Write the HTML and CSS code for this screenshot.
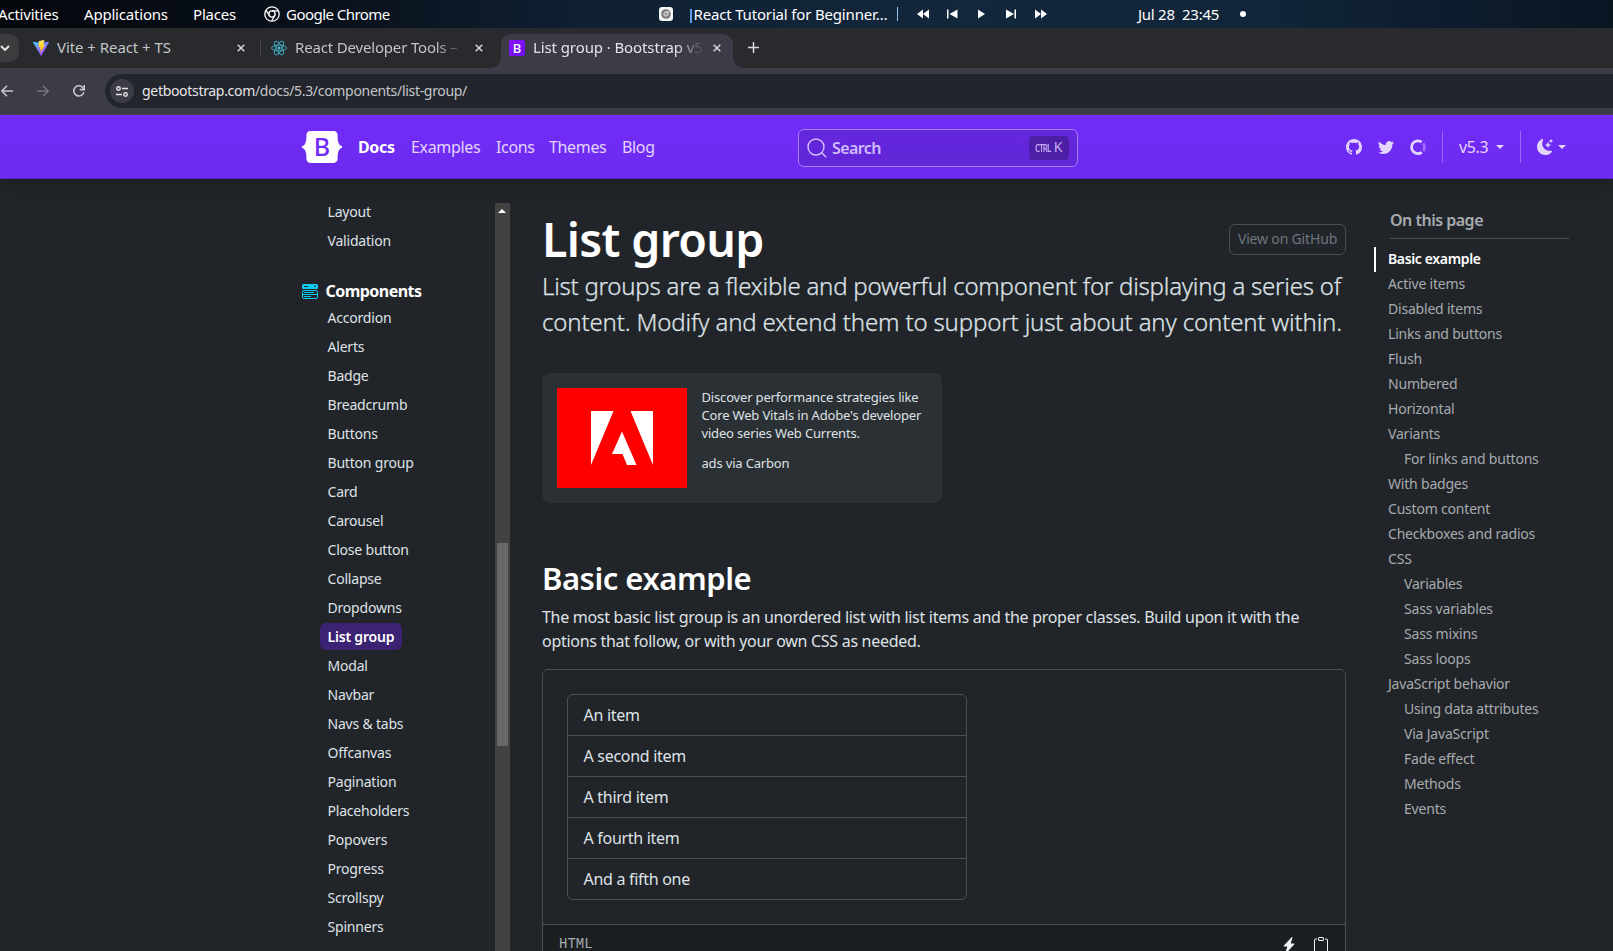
FILE: index.html
```html
<!DOCTYPE html>
<html lang="en">
<head>
<meta charset="utf-8">
<title>List group · Bootstrap v5.3</title>
<link rel="stylesheet" href="styles.css">
</head>
<body>
<div class="screen">
  <header class="desk">
    <div class="desk-left">
      <span class="desk-item activities">Activities</span>
      <span class="desk-item apps">Applications</span>
      <span class="desk-item places">Places</span>
      <svg class="desk-chrome" width="16" height="16" viewBox="0 0 16 16" fill="none" stroke="#fff" stroke-width="1.3"><circle cx="8" cy="8" r="7.2"/><circle cx="8" cy="8" r="3.1"/><path d="M8 4.9h6.3M5.3 9.5 2 4.2M10.7 9.5 7.7 15"/></svg>
      <span class="desk-item chrome">Google Chrome</span>
    </div>
    <div class="desk-media">
      <svg class="player" width="14" height="14" viewBox="0 0 14 14"><rect width="14" height="14" rx="3" fill="#f4f4f4"/><circle cx="7" cy="7" r="4.8" fill="#777"/><circle cx="7" cy="7" r="2.2" fill="#999" stroke="#e4e4e4"/><path d="M7 4.8h4.4" stroke="#ddd"/></svg>
      <i class="bar"></i>
      <span class="song">React Tutorial for Beginner…</span>
      <i class="bar warm"></i>
      <svg class="controls" width="134" height="14" viewBox="0 0 134 14" fill="#fff"><path d="M7 2.500v9L1 7zM13 2.500v9L7 7zM31 2.500h1.500v9H31zM41.500 2.500v9L33.500 7zM62 2.500v9l7-4.500zM90 2.500v9l8-4.500zM98.500 2.500h1.500v9h-1.500zM119 2.500v9l6-4.500zM125 2.500v9l6-4.500z"/></svg>
    </div>
    <div class="desk-clock"><span>Jul 28&nbsp; 23:45</span><i class="dot"></i></div>
  </header>

  <div class="tabs">
    <div class="tab-search"><svg width="10" height="6" viewBox="0 0 10 6" fill="none" stroke="#e3e3e3" stroke-width="2"><path d="m1 1 4 4 4-4"/></svg></div>
    <div class="tab tab-vite">
      <svg width="16" height="16" viewBox="0 0 16 16"><defs><linearGradient id="va" x1="0" y1="0" x2=".7" y2="1"><stop stop-color="#41d1ff"/><stop offset="1" stop-color="#bd34fe"/></linearGradient><linearGradient id="vb" x1="0" y1="0" x2="0" y2="1"><stop stop-color="#ffea83"/><stop offset=".3" stop-color="#ffdd35"/><stop offset="1" stop-color="#ffa800"/></linearGradient></defs><path d="M15.9 2.4 8.5 15.6a.4.4 0 0 1-.7 0L.1 2.4a.4.4 0 0 1 .4-.6L8 3.1l7.5-1.3a.4.4 0 0 1 .4.6z" fill="url(#va)"/><path d="m11.500 0-5.600 1.100-.4 6.200 1.700-.3-.5 2.300 1.300-.3-.8 4.200 5-8.600-2 .4z" fill="url(#vb)"/></svg>
      <span class="tab-title">Vite + React + TS</span>
      <svg class="close" width="8" height="8" viewBox="0 0 8 8"><path d="m.7.7 6.600 6.600m0-6.600L.7 7.300"/></svg>
    </div>
    <i class="tab-sep"></i>
    <div class="tab tab-react">
      <svg width="16" height="16" viewBox="0 0 16 16" fill="none" stroke="#3fa3bb"><circle cx="8" cy="8" r="1.500" fill="#58c4dc" stroke="none"/><ellipse cx="8" cy="8" rx="7.500" ry="2.900"/><ellipse cx="8" cy="8" rx="7.500" ry="2.900" transform="rotate(60 8 8)"/><ellipse cx="8" cy="8" rx="7.500" ry="2.900" transform="rotate(120 8 8)"/></svg>
      <span class="tab-title faded">React Developer Tools –</span>
      <svg class="close" width="8" height="8" viewBox="0 0 8 8"><path d="m.7.7 6.600 6.600m0-6.600L.7 7.300"/></svg>
    </div>
    <div class="tab tab-active">
      <span class="b-icon">B</span>
      <span class="tab-title faded">List group · Bootstrap v5</span>
      <svg class="close" width="8" height="8" viewBox="0 0 8 8"><path d="m.7.7 6.600 6.600m0-6.600L.7 7.300"/></svg>
    </div>
    <svg class="new-tab" width="11" height="11" viewBox="0 0 11 11" stroke="#dcdcdc" stroke-width="1.500"><path d="M5.500 0v11M0 5.500h11"/></svg>
  </div>

  <div class="toolbar">
    <svg class="nav-back" width="12" height="12" viewBox="0 0 12 12" fill="none" stroke="#c7c8cc" stroke-width="1.600"><path d="M12 6H1M6 .8.900 6 6 11.200"/></svg>
    <svg class="nav-fwd" width="12" height="12" viewBox="0 0 12 12" fill="none" stroke="#74757b" stroke-width="1.600"><path d="M0 6h11M6 .8 11.100 6 6 11.200"/></svg>
    <svg class="nav-reload" width="12" height="12" viewBox="0 0 12 12" fill="none" stroke="#c7c8cc" stroke-width="1.600"><path d="M10.800 7.300A5.100 5.100 0 1 1 10.300 3.300L11.200 4.500"/><path d="M11.200 0v4.600H6.800"/></svg>
    <div class="omnibox">
      <span class="site-info"><svg width="12" height="11" viewBox="0 0 12 11" fill="none" stroke="#e3e3e3" stroke-width="1.500"><circle cx="2.500" cy="2.500" r="1.700"/><path d="M6 2.500h6M0 8.500h6"/><circle cx="9.500" cy="8.500" r="1.700"/></svg></span>
      <span class="url">getbootstrap.com<b>/docs/5.3/components/list-group/</b></span>
    </div>
  </div>

  <nav class="navbar">
    <div class="brand">
      <svg width="40" height="32" viewBox="0 0 118 94"><path fill="#fff" d="M24.509 0c-6.733 0-11.715 5.893-11.492 12.284.214 6.140-.064 14.092-2.066 20.577C8.943 39.365 5.547 43.485 0 44.014v5.972c5.547.529 8.943 4.649 10.951 11.153 2.002 6.485 2.280 14.437 2.066 20.577C12.794 88.106 17.776 94 24.510 94H93.500c6.733 0 11.714-5.893 11.491-12.284-.214-6.140.064-14.092 2.066-20.577 2.009-6.504 5.396-10.624 10.943-11.153v-5.972c-5.547-.529-8.934-4.649-10.943-11.153-2.002-6.484-2.280-14.437-2.066-20.577C105.214 5.894 100.233 0 93.500 0H24.508z"/></svg>
      <span>B</span>
    </div>
    <div class="links">
      <a class="l-docs">Docs</a><a class="l-ex">Examples</a><a class="l-ic">Icons</a><a class="l-th">Themes</a><a class="l-bl">Blog</a>
    </div>
    <div class="search">
      <svg width="20" height="20" viewBox="0 0 20 20" fill="none" stroke="#d3c0fb" stroke-width="1.400"><circle cx="9" cy="9" r="8"/><path d="m14.500 14.500 4.700 4.700"/></svg>
      <span class="ph">Search</span>
      <span class="kbd"><small>CTRL</small><span>K</span></span>
    </div>
    <div class="social">
      <svg width="16" height="16" viewBox="0 0 16 16"><path d="M8 0C3.580 0 0 3.580 0 8c0 3.540 2.290 6.530 5.470 7.590.4.070.55-.17.55-.38 0-.19-.01-.82-.01-1.490-2.010.37-2.530-.49-2.690-.94-.09-.23-.48-.94-.82-1.130-.28-.15-.68-.52-.01-.53.63-.01 1.080.58 1.230.82.72 1.210 1.870.87 2.330.66.07-.52.28-.87.51-1.070-1.780-.2-3.640-.89-3.640-3.950 0-.87.31-1.590.82-2.150-.08-.2-.36-1.020.08-2.120 0 0 .67-.21 2.200.82.64-.18 1.320-.27 2-.27s1.360.09 2 .27c1.530-1.040 2.200-.82 2.200-.82.44 1.100.16 1.920.08 2.120.51.56.82 1.270.82 2.150 0 3.070-1.870 3.750-3.650 3.950.29.25.54.73.54 1.480 0 1.070-.01 1.930-.01 2.200 0 .21.15.46.55.38A8.010 8.010 0 0 0 16 8c0-4.420-3.580-8-8-8"/></svg>
      <svg width="16" height="16" viewBox="0 0 16 16"><path d="M5.026 15c6.038 0 9.341-5.003 9.341-9.334q.002-.211-.006-.422A6.700 6.700 0 0 0 16 3.542a6.700 6.700 0 0 1-1.889.518 3.300 3.300 0 0 0 1.447-1.817 6.500 6.500 0 0 1-2.087.793A3.286 3.286 0 0 0 7.875 6.030a9.320 9.320 0 0 1-6.767-3.429 3.290 3.290 0 0 0 1.018 4.382A3.300 3.300 0 0 1 .64 6.575v.045a3.290 3.290 0 0 0 2.632 3.218 3.200 3.200 0 0 1-.865.115 3 3 0 0 1-.614-.057 3.280 3.280 0 0 0 3.067 2.277A6.600 6.600 0 0 1 .78 13.580a6 6 0 0 1-.78-.045A9.340 9.340 0 0 0 5.026 15"/></svg>
      <svg width="16" height="16" viewBox="0 0 40 41"><path fill-opacity=".4" d="M32.800 21c0 2.400-.8 4.900-2 6.900l5.100 5.100c2.500-3.400 4.100-7.600 4.100-12 0-4.600-1.600-8.800-4-12.200L30.700 14c1.200 2 2 4.300 2 7z"/><path d="M20 33.700a12.800 12.800 0 0 1 0-25.600c2.600 0 5 .7 7 2.100L32 5a20 20 0 1 0 .1 31.900l-5-5.200a13 13 0 0 1-7 2z"/></svg>
    </div>
    <i class="vr"></i>
    <div class="version"><span>v5.3</span><i class="caret"></i></div>
    <i class="vr"></i>
    <div class="theme">
      <svg width="16" height="16" viewBox="0 0 16 16"><path d="M6 .278a.77.77 0 0 1 .08.858 7.200 7.200 0 0 0-.878 3.460c0 4.021 3.278 7.277 7.318 7.277q.792-.001 1.533-.16a.79.79 0 0 1 .81.316.73.73 0 0 1-.031.893A8.350 8.350 0 0 1 8.344 16C3.734 16 0 12.286 0 7.710 0 4.266 2.114 1.312 5.124.06A.75.75 0 0 1 6 .278"/><path d="M10.794 3.148a.217.217 0 0 1 .412 0l.387 1.162c.173.518.579.924 1.097 1.097l1.162.387a.217.217 0 0 1 0 .412l-1.162.387a1.730 1.730 0 0 0-1.097 1.097l-.387 1.162a.217.217 0 0 1-.412 0l-.387-1.162A1.730 1.730 0 0 0 9.310 6.593l-1.162-.387a.217.217 0 0 1 0-.412l1.162-.387a1.730 1.730 0 0 0 1.097-1.097zM13.863.099a.145.145 0 0 1 .274 0l.258.774c.115.346.386.617.732.732l.774.258a.145.145 0 0 1 0 .274l-.774.258a1.160 1.160 0 0 0-.732.732l-.258.774a.145.145 0 0 1-.274 0l-.258-.774a1.160 1.160 0 0 0-.732-.732l-.774-.258a.145.145 0 0 1 0-.274l.774-.258c.346-.115.617-.386.732-.732z"/></svg>
      <i class="caret"></i>
    </div>
  </nav>

  <div class="page">
    <aside class="sidebar">
      <div class="side-scroll">
        <ul><li>Layout</li><li>Validation</li></ul>
        <h2 class="side-head"><svg width="16" height="15" viewBox="0 0 16 15"><rect width="16" height="5" rx="1.500" fill="#0dcaf0"/><path d="M2 2.500h4M12 2.300h2" stroke="#212529"/><rect x=".5" y="6.500" width="15" height="8" rx="1.500" fill="none" stroke="#0dcaf0"/><path d="M2 8.500h10M1 10.500h14M2 12.500h7" stroke="#0dcaf0"/></svg>Components</h2>
        <ul>
          <li>Accordion</li><li>Alerts</li><li>Badge</li><li>Breadcrumb</li><li>Buttons</li><li>Button group</li><li>Card</li><li>Carousel</li><li>Close button</li><li>Collapse</li><li>Dropdowns</li><li class="active">List group</li><li>Modal</li><li>Navbar</li><li>Navs &amp; tabs</li><li>Offcanvas</li><li>Pagination</li><li>Placeholders</li><li>Popovers</li><li>Progress</li><li>Scrollspy</li><li>Spinners</li>
        </ul>
      </div>
      <div class="scrollbar"><i class="arrow"></i><i class="thumb"></i></div>
    </aside>

    <main class="content">
      <div class="title-row"><h1>List group</h1><a class="gh">View on GitHub</a></div>
      <p class="lead">List groups are a flexible and powerful component for displaying a series of<br><span>content. Modify and extend them to support just about any content within.</span></p>
      <div class="ad">
        <svg width="130" height="100" viewBox="0 0 130 100"><path fill="#f00" d="M0 0h130v100H0z"/><path fill="#fff" d="M34 23h22.500L34 77zM73.500 23H96v54zM65 43.500 79.500 77H70l-4.500-11H55z"/></svg>
        <div class="ad-text"><p>Discover performance strategies like<br>Core Web Vitals in Adobe's developer<br>video series Web Currents.</p><p>ads via Carbon</p></div>
      </div>
      <h2 class="section">Basic example</h2>
      <p class="para">The most basic list group is an unordered list with list items and the proper classes. Build upon it with the<br>options that follow, or with your own CSS as needed.</p>
      <div class="example">
        <ul class="list-group"><li>An item</li><li>A second item</li><li>A third item</li><li>A fourth item</li><li>And a fifth one</li></ul>
        <div class="codebar">
          <span>HTML</span>
          <svg class="bolt" width="16" height="16" viewBox="0 0 16 16"><path d="M11.251.068a.5.5 0 0 1 .227.580L9.677 6.500H13a.5.5 0 0 1 .364.843l-8 8.500a.5.5 0 0 1-.842-.490L6.323 9.500H3a.5.5 0 0 1-.364-.843l8-8.500a.5.5 0 0 1 .615-.090z"/></svg>
          <svg width="16" height="16" viewBox="0 0 16 16"><path d="M4 1.500H3a2 2 0 0 0-2 2V14a2 2 0 0 0 2 2h10a2 2 0 0 0 2-2V3.500a2 2 0 0 0-2-2h-1v1h1a1 1 0 0 1 1 1V14a1 1 0 0 1-1 1H3a1 1 0 0 1-1-1V3.500a1 1 0 0 1 1-1h1z"/><path d="M9.500 1a.5.5 0 0 1 .5.5v1a.5.5 0 0 1-.5.5h-3a.5.5 0 0 1-.5-.5v-1a.5.5 0 0 1 .5-.5zm-3-1A1.500 1.500 0 0 0 5 1.500v1A1.500 1.500 0 0 0 6.500 4h3A1.500 1.500 0 0 0 11 2.500v-1A1.500 1.500 0 0 0 9.500 0z"/></svg>
        </div>
      </div>
    </main>

    <aside class="toc">
      <strong>On this page</strong>
      <ul>
        <li class="active">Basic example</li><li>Active items</li><li>Disabled items</li><li>Links and buttons</li><li>Flush</li><li>Numbered</li><li>Horizontal</li><li>Variants</li><li class="sub">For links and buttons</li><li>With badges</li><li>Custom content</li><li>Checkboxes and radios</li><li>CSS</li><li class="sub">Variables</li><li class="sub">Sass variables</li><li class="sub">Sass mixins</li><li class="sub">Sass loops</li><li>JavaScript behavior</li><li class="sub">Using data attributes</li><li class="sub">Via JavaScript</li><li class="sub">Fade effect</li><li class="sub">Methods</li><li class="sub">Events</li>
      </ul>
    </aside>
  </div>
</div>
</body>
</html>
```
FILE: styles.css
```css
* { box-sizing: border-box; }
body { margin: 0; overflow: hidden; background: #212529; color: #dee2e6; font-family: "Noto Sans", sans-serif; font-size: 16px; letter-spacing: -.29px; }
ul, p, h1, h2 { margin: 0; padding: 0; list-style: none; }
svg { display: block; flex: none; }
i { display: block; flex: none; }
.screen { width: 1613px; height: 951px; overflow: hidden; display: flex; flex-direction: column; white-space: nowrap; }

/* desktop panel */
.desk { height: 28px; flex: none; display: flex; align-items: center; background: linear-gradient(90deg, #04070c 0, #0a121d 22%, #0f2032 36%, #13273c 60%, #11253a 78%, #0a1522 100%); color: #fff; font-size: 15px; line-height: 26px; letter-spacing: -.2px; }
.desk span { margin-top: -1px; }
.desk-left { width: 659px; display: flex; align-items: center; }
.desk .activities { margin-left: -2px; width: 86px; }
.apps { width: 109px; }
.places { width: 71px; }
.chrome { margin-left: 6px; letter-spacing: -.54px; }
.desk-media { width: 479px; display: flex; align-items: center; }
.bar { width: 1.500px; height: 14px; margin: 3px 2px 0 17px; background: #5a9fe8; }
.song { width: 203px; letter-spacing: -.17px; }
.bar.warm { margin: 0 18px 0 0; background: #8fc0f0; }
.desk-clock { display: flex; align-items: center; letter-spacing: -.26px; }
.desk-clock span { width: 102px; }
.dot { width: 6px; height: 6px; border-radius: 3px; background: #fff; }

/* browser tabs */
.tabs { height: 40px; flex: none; display: flex; align-items: flex-end; background: #282a2d; color: #c3c4c8; font-size: 15px; letter-spacing: -.06px; }
.tab-search { width: 19px; height: 28px; margin-bottom: 6px; border-radius: 0 10px 10px 0; background: #3c3b3d; display: flex; align-items: center; }
.tab { height: 34px; display: flex; align-items: center; padding-bottom: 6px; line-height: 26px; }
.tab-title { margin: -1px 0 1px 8px; overflow: hidden; }
.tab-vite { width: 241px; padding-left: 14px; }
.tab-vite .tab-title { width: 184px; }
.tab-vite .close { margin-left: -4px; }
.tab-react { width: 240px; padding-left: 10px; letter-spacing: -.17px; }
.tab-react .tab-title { width: 172px; }
.faded { -webkit-mask-image: linear-gradient(90deg, #000 82%, transparent 98%); mask-image: linear-gradient(90deg, #000 82%, transparent 98%); }
.close { stroke: #d8d8da; stroke-width: 1.500; }
.tab-react .close { margin-left: 8px; }
.tab-sep { width: 1px; height: 16px; margin-bottom: 12px; background: #44464a; }
.tab-active { width: 232px; padding-left: 8px; border-radius: 10px 10px 0 0; background: #3b3c45; color: #e4e4e6; position: relative; letter-spacing: -.1px; }
.tab-active::before, .tab-active::after { content: ""; position: absolute; bottom: 0; width: 10px; height: 10px; }
.tab-active::before { left: -10px; background: radial-gradient(circle at 0 0, transparent 9.500px, #3b3c45 10px); }
.tab-active::after { right: -10px; background: radial-gradient(circle at 100% 0, transparent 9.500px, #3b3c45 10px); }
.tab-active .tab-title { width: 174px; }
.tab-active .close { margin-left: 6px; }
.b-icon { width: 16px; height: 16px; border-radius: 2px; background: linear-gradient(135deg, #8a12fc, #6a10f5); color: #fff; font: 500 13px/16px "Noto Sans", sans-serif; text-align: center; }
.new-tab { margin: 0 0 15px 15px; }

/* toolbar */
.toolbar { height: 47px; flex: none; display: flex; align-items: center; background: #3b3c45; border-bottom: 1px solid #4a4a50; }
.nav-back { margin-left: 1px; }
.nav-fwd { margin-left: 24px; }
.nav-reload { margin-left: 24px; }
.omnibox { flex: 1; margin-left: 20px; height: 34px; border-radius: 17px 0 0 17px; background: #23252c; display: flex; align-items: center; padding-left: 5px; }
.site-info { width: 24px; height: 24px; border-radius: 12px; background: #3b3c45; display: grid; place-items: center; }
.url { margin: -1px 0 0 8px; color: #e6e6e9; font-size: 14px; letter-spacing: -.31px; }
.url b { font-weight: 400; color: #c4c5ca; }

/* site navbar */
.navbar { height: 64px; flex: none; display: flex; align-items: center; background: linear-gradient(#712cf9, #6c2bee); color: #e3d5fe; box-shadow: 0 8px 16px rgba(0,0,0,.15), inset 0 -1px 0 rgba(0,0,0,.15); position: relative; letter-spacing: -.34px; }
.brand { width: 40px; margin-left: 302px; display: grid; }
.brand svg, .brand span { grid-area: 1 / 1; }
.brand span { text-align: center; font: 500 25px/31px "Noto Sans", sans-serif; color: #6f2cf6; letter-spacing: 0; }
.links { width: 440px; padding-left: 16px; display: flex; }
.l-docs { width: 53px; color: #fff; font-weight: 700; }
.l-ex { width: 85px; }
.l-ic { width: 53px; }
.l-th { width: 73px; }
.search { margin: 1px 0 0 16px; width: 280px; height: 38px; border: 1px solid #a580fb; border-radius: 6px; background: rgba(0,0,0,.1); display: flex; align-items: center; padding: 0 8px; }
.ph { margin-left: 5px; width: 197px; font-weight: 600; color: #d0bbfb; letter-spacing: -.6px; }
.kbd { width: 40px; height: 24px; border-radius: 4px; background: #4d1fa6; color: #c3a9f2; display: flex; align-items: center; justify-content: space-between; padding: 0 7px 0 6px; font-size: 14px; line-height: 22px; }
.kbd small { width: 16px; font-size: 8px; font-weight: 600; letter-spacing: -.9px; transform: scaleY(1.300); }
.kbd > span { margin-top: -2px; }
.social { margin-left: 268px; width: 96px; display: flex; gap: 16px; fill: #e3d5fe; }
.vr { width: 1px; height: 32px; background: #9a69fb; }
.version { width: 77px; padding-left: 16px; display: flex; align-items: center; }
.version span { width: 37px; }
.caret { border: 4px solid transparent; border-top-color: #e3d5fe; border-bottom: 0; }
.theme { padding-left: 16px; display: flex; align-items: center; gap: 5px; fill: #e3d5fe; }

/* three-column page */
.page { flex: 1; min-height: 0; display: flex; align-items: flex-start; }
.sidebar { width: 542px; height: 748px; margin-top: 24px; padding-left: 302px; display: flex; }
.side-scroll { width: 193px; font-size: 14px; line-height: 21px; letter-spacing: -.2px; height: 748px; overflow: hidden; }
.side-scroll li { width: fit-content; margin: 2px 0 0 18px; padding: 3px 8px 3px 7.500px; border-radius: 6px; }
.side-scroll ul:first-child { margin-top: -7px; }
.side-scroll li.active { background: #3c2272; color: #fff; font-weight: 600; }
.side-head { display: flex; align-items: center; gap: 7.500px; height: 24px; margin-top: 25px; font-size: 16px; font-weight: 700; color: #fff; letter-spacing: -.54px; }
.side-scroll .side-head + ul { margin-top: -1px; }
.scrollbar { width: 15px; background: #424242; }
.arrow { margin: 6px 0 0 3px; width: 8px; border: 4px solid transparent; border-bottom-color: #fff; border-top: 0; }
.thumb { margin: 330px auto 0; width: 11px; height: 203px; background: #686868; }

.content { width: 804px; padding-top: 31px; }
.title-row { display: flex; justify-content: space-between; align-items: flex-start; height: 58px; }
h1 { font-size: 46.500px; font-weight: 600; line-height: 58px; color: #fff; letter-spacing: -.65px; }
.gh { margin-top: 14px; width: 117px; height: 31px; border: 1px solid #495057; border-radius: 6px; text-align: center; font-size: 14px; line-height: 28px; letter-spacing: -.17px; color: #6c757d; }
.lead { font-size: 24px; font-weight: 300; line-height: 36px; letter-spacing: -.23px; -webkit-text-stroke: .25px #dee2e6; }
.lead span { letter-spacing: -.15px; }
.ad { margin-top: 33px; width: 400px; height: 130px; border-radius: 8px; background: #2b3035; padding: 15px; display: flex; gap: 14.500px; }
.ad-text { font-size: 13px; line-height: 18px; letter-spacing: -.17px; }
.ad-text p + p { margin-top: 12px; }
.section { margin-top: 55px; font-size: 31px; font-weight: 600; line-height: 40px; color: #fff; letter-spacing: -.48px; }
.para { margin-top: 7px; line-height: 24px; }
.example { margin-top: 16px; height: 320px; border: 1px solid #495057; border-radius: 6px; overflow: hidden; }
.list-group { margin: 24px; width: 400px; border: 1px solid #495057; border-radius: 6px; }
.list-group li { padding: 8px 15.500px; line-height: 24px; border-bottom: 1px solid #495057; }
.list-group li:last-child { border-bottom: 0; }
.codebar { height: 60px; border-top: 1px solid #495057; background: #1b1f21; display: flex; padding: 12px 16px; fill: #f0f2f4; }
.codebar span { flex: 1; margin-top: -3px; font: 14px/20px "Liberation Mono", monospace; color: #a9adb1; letter-spacing: 0; }
.bolt { margin-right: 16px; }

.toc { margin: 29px 0 0 28px; width: 195px; font-size: 14px; letter-spacing: -.2px; color: #a7abaf; }
.toc strong { display: block; margin-left: 16px; height: 31px; border-bottom: 1px solid #4b4f53; font-size: 16px; font-weight: 600; line-height: 24px; letter-spacing: -.5px; }
.toc ul { margin-top: 8px; }
.toc li { height: 25px; padding-left: 12px; border-left: 2px solid transparent; line-height: 24px; }
.toc .sub { padding-left: 28px; }
.toc .active { color: #fff; font-weight: 600; border-color: #fff; letter-spacing: -.36px; }
```
